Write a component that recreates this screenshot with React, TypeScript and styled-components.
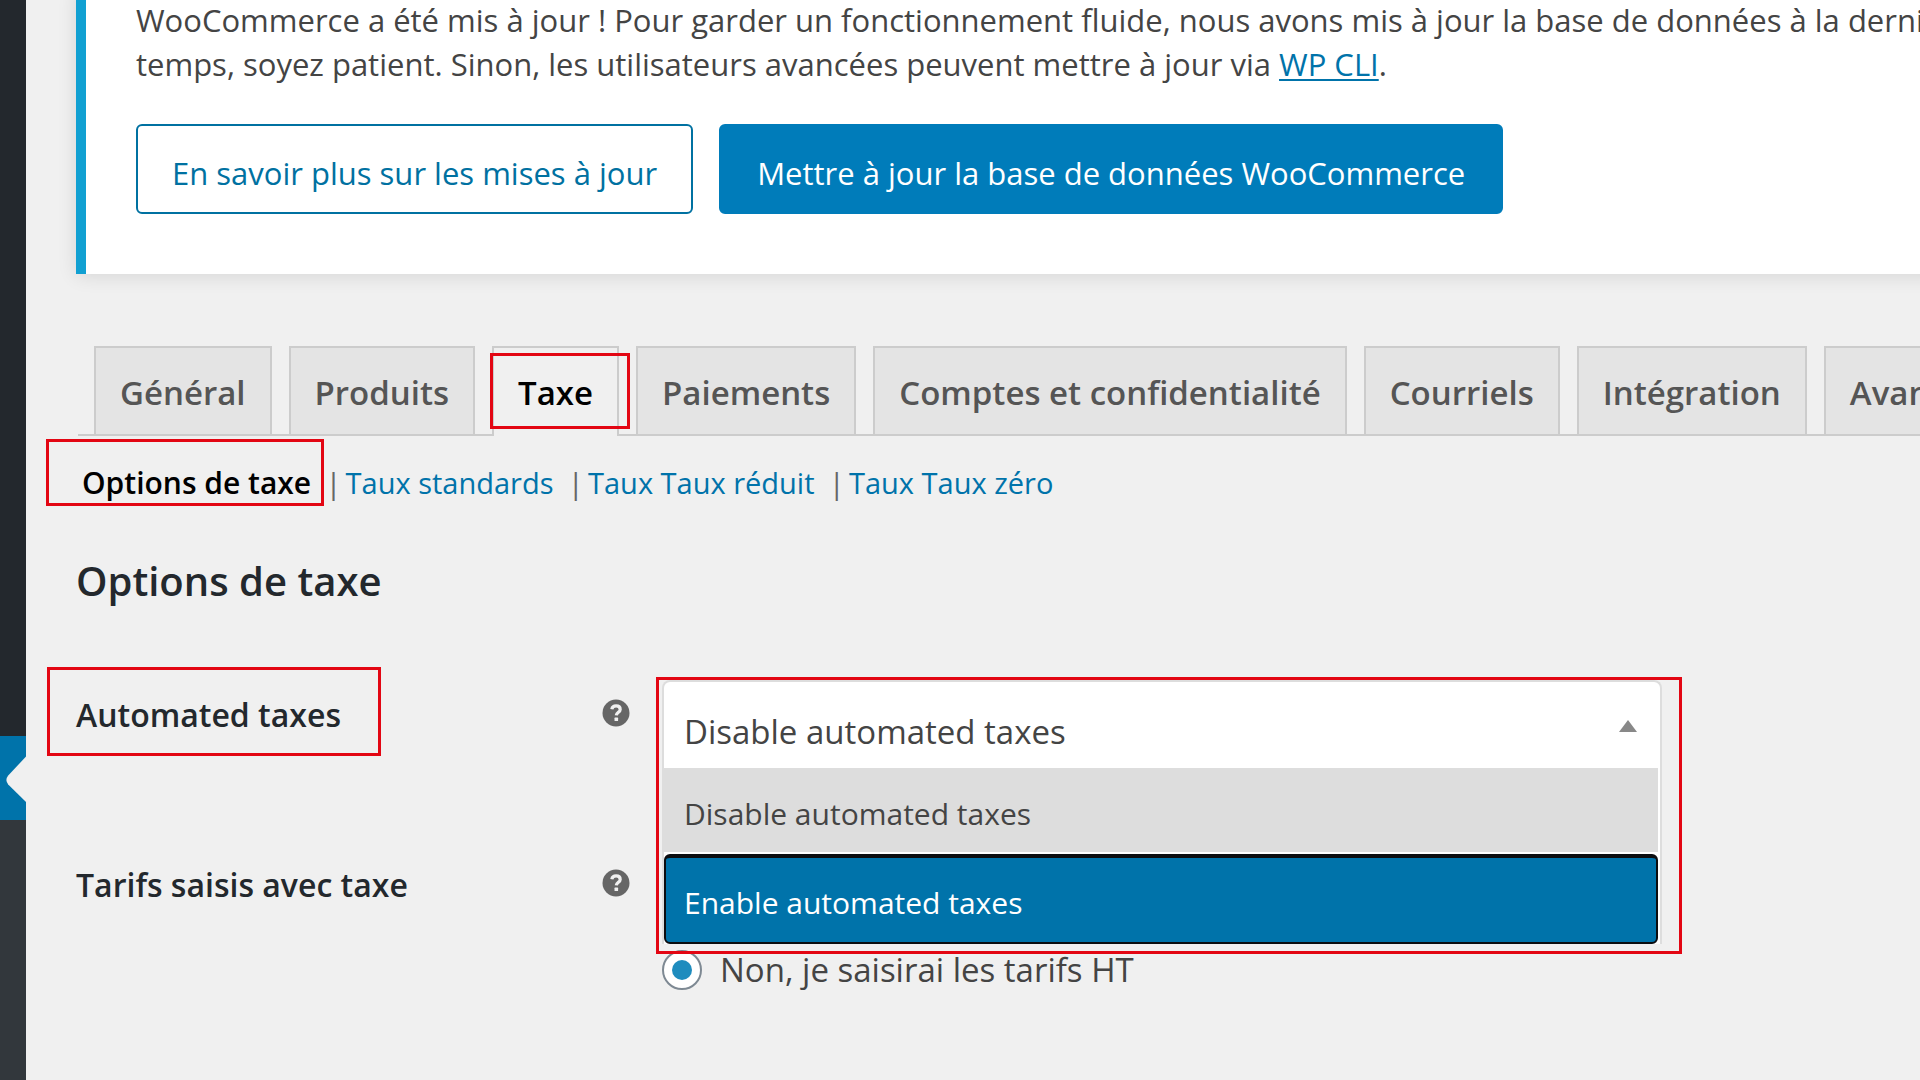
import React, { useState } from "react";
import styled, { createGlobalStyle, css } from "styled-components";

const GlobalStyle = createGlobalStyle`
  *, *::before, *::after { box-sizing: border-box; }
  body {
    margin: 0;
    overflow: hidden;
    background: #f0f0f0;
    color: #444;
    font-family: "Open Sans", "Noto Sans", sans-serif;
    font-size: 30px;
  }
`;

const Page = styled.div`
  display: flex;
  min-height: 100vh;
`;

const AdminMenu = styled.nav`
  flex: 0 0 26px;
  display: flex;
  flex-direction: column;
  background: #32373c;
`;

const MenuSection = styled.div`
  height: 736px;
  background: #23282d;
`;

const CurrentMenuItem = styled.a`
  display: flex;
  align-items: center;
  justify-content: flex-end;
  height: 84px;
  padding-top: 4px;
  background: #0073aa;
`;

const Content = styled.main`
  flex: 1;
  min-width: 0;
  padding-left: 50px;
`;

const Notice = styled.section`
  margin-top: -12px;
  padding: 10px 0 60px 50px;
  overflow: hidden;
  background: #fff;
  border-left: 10px solid #11a0d2;
`;

const NoticeShadow = styled.div`
  margin-right: -20px;
  box-shadow: 0 2px 18px rgba(0, 0, 0, 0.11);
`;

const NoticeText = styled.p`
  margin: 0 0 38px;
  font-size: 31px;
  line-height: 44px;
  white-space: nowrap;

  a {
    color: #0073aa;
    text-decoration-thickness: 2px;
    text-underline-offset: 3px;
  }
`;

const Actions = styled.div`
  display: flex;
  gap: 26px;
`;

const Button = styled.button<{ $primary?: boolean }>`
  height: 90px;
  padding: 7px 34px 0;
  border: 2px solid #0071a1;
  border-radius: 6px;
  background: #fff;
  color: #0071a1;
  font: 400 31px "Open Sans", "Noto Sans", sans-serif;
  white-space: nowrap;

  ${(p) =>
    p.$primary &&
    css`
      padding: 7px 36px 0;
      border-color: #007cba;
      background: #007cba;
      color: #fff;
    `}
`;

const Tabs = styled.nav`
  display: flex;
  gap: 17px;
  margin: 72px 0 0 2px;
  padding-left: 16px;
  border-bottom: 2px solid #ccc;
`;

const Tab = styled.a<{ $active?: boolean }>`
  position: relative;
  flex: none;
  padding: 4px 24px 0;
  border: 2px solid #ccc;
  border-bottom: 0;
  background: ${(p) => (p.$active ? "#f0f0f0" : "#e4e4e4")};
  margin-bottom: ${(p) => (p.$active ? "-2px" : "0")};
  color: ${(p) => (p.$active ? "#000" : "#555")};
  font-size: 33px;
  font-weight: 600;
  line-height: 82px;
  text-decoration: none;
`;

const Marker = styled.span<{ $inset: string }>`
  position: absolute;
  z-index: 3;
  inset: ${(p) => p.$inset};
  border: 3px solid #e30613;
  pointer-events: none;
`;

const SubNav = styled.ul`
  display: flex;
  margin: 27px 0 0;
  padding: 0 0 0 6px;
  list-style: none;
  line-height: 40px;

  li + li::before {
    content: "|";
    margin: 0 4px 0 14px;
    color: #666;
  }
`;

const SubLink = styled.a<{ $current?: boolean }>`
  position: relative;
  color: ${(p) => (p.$current ? "#000" : "#0073aa")};
  font-size: ${(p) => (p.$current ? "30px" : "29px")};
  font-weight: ${(p) => (p.$current ? 600 : 400)};
  text-decoration: none;
`;

const Heading = styled.h2`
  margin: 52px 0 73px;
  color: #23282d;
  font-size: 40px;
  font-weight: 600;
  line-height: 52px;
`;

const Field = styled.div`
  display: grid;
  grid-template-columns: 494px 28px minmax(0, 1fr);
  column-gap: 32px;
  align-items: start;
  min-height: 170px;
`;

const FieldName = styled.div`
  padding-top: 13px;
  color: #23282d;
  font-size: 32px;
  font-weight: 600;
  line-height: 44px;

  > * {
    position: relative;
    display: inline-block;
  }
`;

const HelpButton = styled.button`
  display: block;
  width: 28px;
  height: 28px;
  margin-top: 19px;
  padding: 0;
  border: 0;
  background: none;
`;

const SelectBox = styled.div`
  position: relative;
  width: 1000px;
  max-width: 100%;
`;

const Select = styled.select`
  display: block;
  width: 100%;
  height: 88px;
  padding: 12px 60px 0 20px;
  appearance: none;
  border: 2px solid #ddd;
  border-bottom: 0;
  border-radius: 8px 8px 0 0;
  outline: 0;
  background: #fff;
  color: #444;
  font: 400 33px "Open Sans", "Noto Sans", sans-serif;
`;

const Arrow = styled.svg`
  position: absolute;
  top: 40px;
  right: 25px;
`;

const Options = styled.ul`
  position: absolute;
  z-index: 2;
  top: 100%;
  left: 0;
  right: 0;
  display: flex;
  flex-direction: column;
  gap: 2px;
  margin: 0;
  padding: 0 2px 0 0;
  border: solid #ddd;
  border-width: 0 2px;
  background: #fff;
  list-style: none;
`;

const Option = styled.li<{ $highlighted: boolean }>`
  padding: 8px 20px 0;
  background: #ddd;
  line-height: 76px;

  ${(p) =>
    p.$highlighted &&
    css`
      border: 2px solid #0c0d10;
      border-top-width: 4px;
      border-radius: 6px;
      padding: 6px 18px 0;
      background: #0073aa;
      color: #fff;
      line-height: 78px;
    `}
`;

const RadioRow = styled.label`
  display: flex;
  align-items: center;
  gap: 18px;
  margin-top: 96px;
  font-size: 33px;
  line-height: 48px;
`;

const Radio = styled.input`
  display: grid;
  place-items: center;
  width: 40px;
  height: 40px;
  margin: 0;
  appearance: none;
  border: 2px solid #7e8993;
  border-radius: 50%;
  background: #fff;

  &:checked::before {
    content: "";
    width: 20px;
    height: 20px;
    border-radius: 50%;
    background: #1e8cbe;
  }
`;

const tabs = [
  "Général",
  "Produits",
  "Taxe",
  "Paiements",
  "Comptes et confidentialité",
  "Courriels",
  "Intégration",
  "Avancé",
];

const sections = ["Options de taxe", "Taux standards", "Taux Taux réduit", "Taux Taux zéro"];

const choices = ["Disable automated taxes", "Enable automated taxes"];

function Help({ label }: { label: string }) {
  return (
    <HelpButton type="button" aria-label={label}>
      <svg width="28" height="28" viewBox="0 0 28 28" aria-hidden="true">
        <circle cx="14" cy="14" r="13.5" fill="#666" />
        <path
          d="M9.8 10.2C10.2 7.9 11.9 6.9 14.1 6.9C16.5 6.9 18.2 8.2 18.2 10.4C18.2 13.2 14.6 13.2 14.3 16.4"
          fill="none"
          stroke="#f0f0f0"
          strokeWidth="3.2"
        />
        <rect x="12.5" y="18.6" width="3.6" height="3.4" rx="0.6" fill="#f0f0f0" />
      </svg>
    </HelpButton>
  );
}

export default function App() {
  const [choice, setChoice] = useState(choices[0]);

  return (
    <Page>
      <GlobalStyle />
      <AdminMenu aria-label="Administration">
        <MenuSection />
        <CurrentMenuItem href="#" aria-label="WooCommerce" aria-current="page">
          <svg width="20" height="50" viewBox="0 0 20 50" aria-hidden="true">
            <path d="M20 1.500L2.200 20.500Q-1.400 25 2.200 29.500L20 47Z" fill="#f0f0f0" />
          </svg>
        </CurrentMenuItem>
      </AdminMenu>

      <Content>
        <NoticeShadow>
          <Notice>
            <NoticeText>
              WooCommerce a été mis à jour ! Pour garder un fonctionnement fluide, nous avons mis à
              jour la base de données à la dernière
              <br />
              temps, soyez patient. Sinon, les utilisateurs avancées peuvent mettre à jour via{" "}
              <a href="#">WP CLI</a>.
            </NoticeText>
            <Actions>
              <Button type="button">En savoir plus sur les mises à jour</Button>
              <Button type="button" $primary>
                Mettre à jour la base de données WooCommerce
              </Button>
            </Actions>
          </Notice>
        </NoticeShadow>

        <Tabs>
          {tabs.map((name) => (
            <Tab key={name} href="#" $active={name === "Taxe"}>
              {name}
              {name === "Taxe" && <Marker $inset="5px -13px 7px -4px" />}
            </Tab>
          ))}
        </Tabs>

        <SubNav>
          {sections.map((name, i) => (
            <li key={name}>
              <SubLink href="#" $current={i === 0}>
                {name}
                {i === 0 && <Marker $inset="-23px -13px -3px -36px" />}
              </SubLink>
            </li>
          ))}
        </SubNav>

        <Heading>Options de taxe</Heading>

        <Field>
          <FieldName>
            <label htmlFor="automated-taxes">
              Automated taxes
              <Marker $inset="-26px -40px -19px -29px" />
            </label>
          </FieldName>
          <Help label="Aide : Automated taxes" />
          <SelectBox>
            <Select
              id="automated-taxes"
              value={choice}
              onChange={(e) => setChoice(e.target.value)}
            >
              {choices.map((c) => (
                <option key={c}>{c}</option>
              ))}
            </Select>
            <Arrow width="18" height="12" viewBox="0 0 18 12" aria-hidden="true">
              <path d="M9 0L18 12H0Z" fill="#888" />
            </Arrow>
            <Options role="listbox" aria-label="Automated taxes">
              {choices.map((c, i) => (
                <Option
                  key={c}
                  role="option"
                  aria-selected={c === choice}
                  $highlighted={i === 1}
                  onClick={() => setChoice(c)}
                >
                  {c}
                </Option>
              ))}
            </Options>
            <Marker $inset="-3px -20px -186px -6px" />
          </SelectBox>
        </Field>

        <Field role="radiogroup" aria-labelledby="prices-include-tax">
          <FieldName>
            <span id="prices-include-tax">Tarifs saisis avec taxe</span>
          </FieldName>
          <Help label="Aide : Tarifs saisis avec taxe" />
          <RadioRow>
            <Radio type="radio" name="prices-include-tax" value="no" defaultChecked />
            Non, je saisirai les tarifs HT
          </RadioRow>
        </Field>
      </Content>
    </Page>
  );
}
